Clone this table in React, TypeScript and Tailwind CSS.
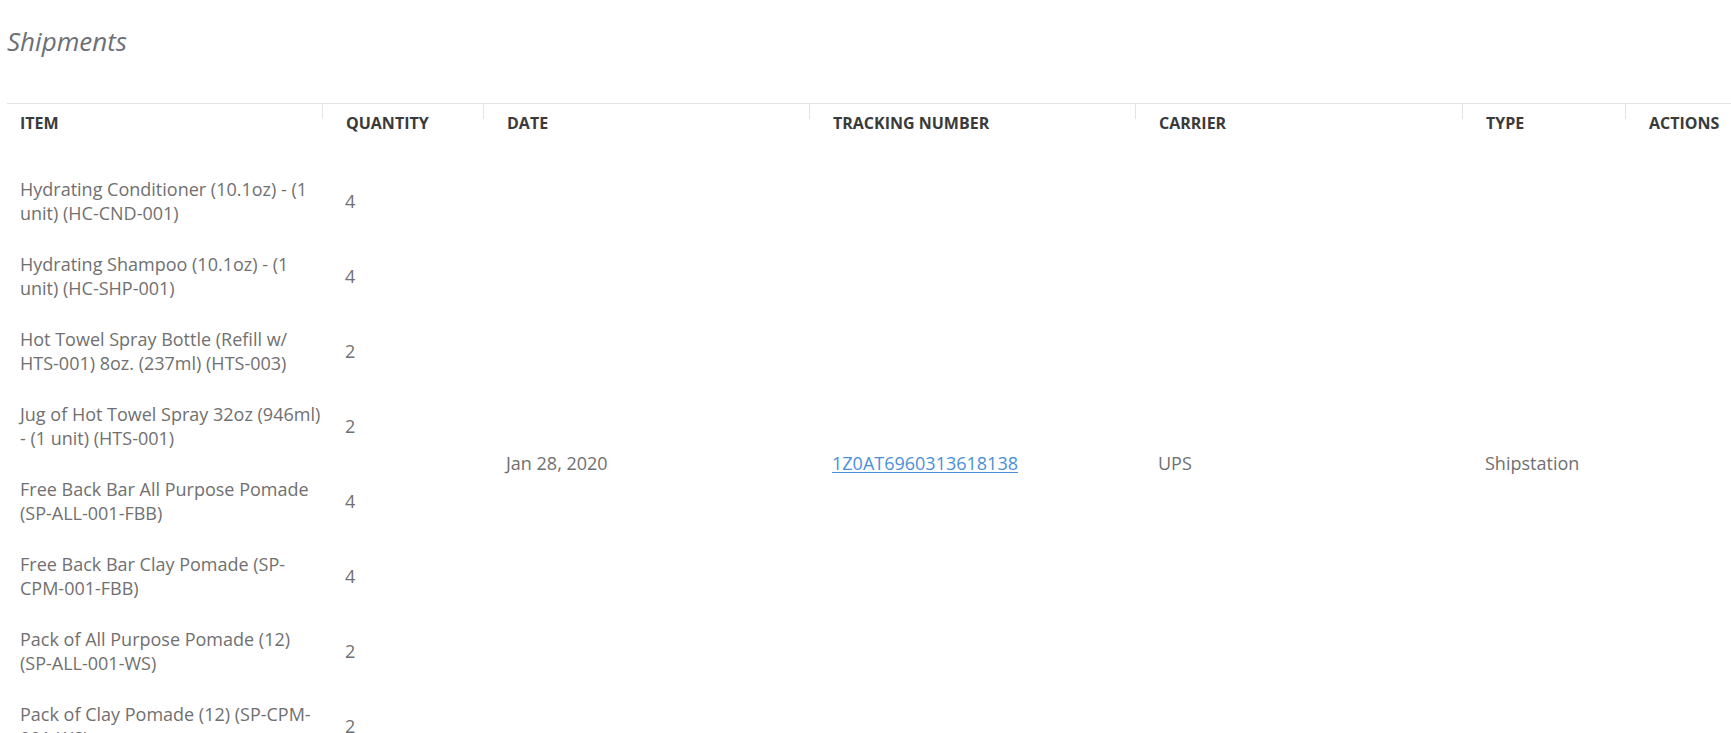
import React from "react";

interface ShipmentItem {
  name: string;
  qty: number;
}

const items: ShipmentItem[] = [
  { name: "Hydrating Conditioner (10.1oz) - (1 unit) (HC-CND-001)", qty: 4 },
  { name: "Hydrating Shampoo (10.1oz) - (1 unit) (HC-SHP-001)", qty: 4 },
  { name: "Hot Towel Spray Bottle (Refill w/ HTS-001) 8oz. (237ml) (HTS-003)", qty: 2 },
  { name: "Jug of Hot Towel Spray 32oz (946ml) - (1 unit) (HTS-001)", qty: 2 },
  { name: "Free Back Bar All Purpose Pomade (SP-ALL-001-FBB)", qty: 4 },
  { name: "Free Back Bar Clay Pomade (SP-CPM-001-FBB)", qty: 4 },
  { name: "Pack of All Purpose Pomade (12) (SP-ALL-001-WS)", qty: 2 },
  { name: "Pack of Clay Pomade (12) (SP-CPM-001-WS)", qty: 2 },
];

function HeadCell({ label, width }: { label: string; width: string }) {
  return (
    <div className={`flex items-start shrink-0 ${width}`}>
      <div className="w-px h-[15px] bg-[#e2e4e7]" />
      <span className="ml-[23px] mt-[7px] leading-[24px]">{label}</span>
    </div>
  );
}

export default function App() {
  return (
    <div className="min-h-screen w-full overflow-hidden bg-white font-['Open_Sans',sans-serif]">
      <h1 className="pl-[7px] pt-[23px] text-[26px] leading-[36px] italic font-normal text-[#6d7076]">
        Shipments
      </h1>

      <div className="mt-[44px] ml-[7px] border-t border-[#e2e4e7] min-w-[1800px]">
        {/* Header */}
        <div className="flex h-[59px] text-[16px] font-bold uppercase text-[#3a3a3a]">
          <div className="w-[315px] shrink-0 pl-[13px]">
            <span className="block mt-[7px] leading-[24px]">Item</span>
          </div>
          <HeadCell label="Quantity" width="w-[161px]" />
          <HeadCell label="Date" width="w-[326px]" />
          <HeadCell label="Tracking Number" width="w-[326px]" />
          <HeadCell label="Carrier" width="w-[327px]" />
          <HeadCell label="Type" width="w-[163px]" />
          <HeadCell label="Actions" width="w-[163px]" />
        </div>

        {/* Body */}
        <div className="flex text-[18px] leading-[24px] text-[#707070]">
          <div className="flex flex-col">
            {items.map((it, i) => (
              <div key={i} className="flex items-center h-[75px] pt-[1px]">
                <div className="w-[315px] shrink-0 pl-[13px]">
                  <p className="w-[306px]">{it.name}</p>
                </div>
                <div className="w-[161px] shrink-0 pl-[23px]">{it.qty}</div>
              </div>
            ))}
          </div>
          <div className="w-[326px] shrink-0 pl-[23px] flex items-center">Jan 28, 2020</div>
          <div className="w-[326px] shrink-0 pl-[23px] flex items-center">
            <a href="#" className="text-[#4a90d9] underline underline-offset-2">
              1Z0AT6960313618138
            </a>
          </div>
          <div className="w-[327px] shrink-0 pl-[23px] flex items-center">UPS</div>
          <div className="w-[163px] shrink-0 pl-[23px] flex items-center">Shipstation</div>
          <div className="w-[163px] shrink-0" />
        </div>
      </div>
    </div>
  );
}
